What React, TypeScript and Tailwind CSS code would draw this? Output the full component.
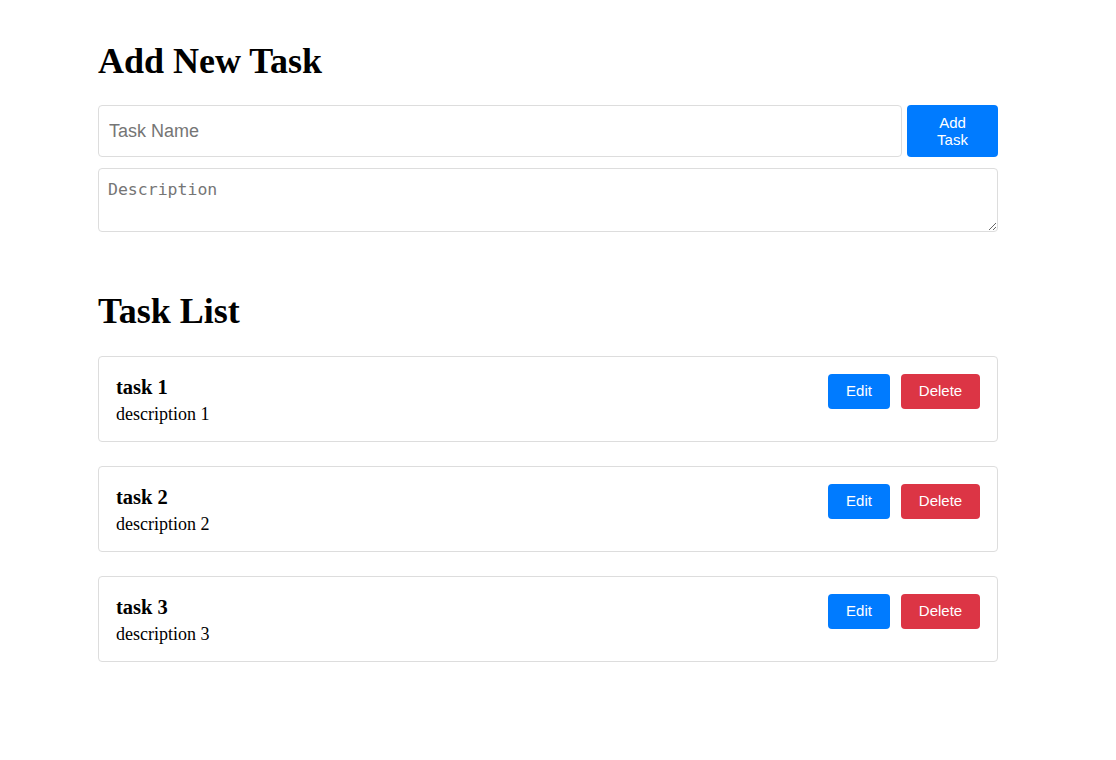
import React from "react";

const tasks = [
  { name: "task 1", desc: "description 1" },
  { name: "task 2", desc: "description 2" },
  { name: "task 3", desc: "description 3" },
];

export default function App() {
  return (
    <div className="min-h-[760px] bg-white" style={{ fontFamily: '"Liberation Serif", serif' }}>
      <div className="ml-[98px] w-[900px] pt-[39px]">
        <h2 className="text-[36px] font-bold leading-[44px] text-black">Add New Task</h2>
        <div className="mt-[22px] flex gap-[5px]">
          <input
            placeholder="Task Name"
            className="h-[52px] flex-1 rounded-[4px] border border-[#dddddd] px-[10px] text-[18px] text-black outline-none placeholder:text-[#757575]"
            style={{ fontFamily: '"Liberation Sans", Arial, sans-serif' }}
          />
          <button
            className="h-[52px] w-[91px] rounded-[4px] bg-[#007bff] text-[15px] leading-[17px] text-white"
            style={{ fontFamily: '"Liberation Sans", Arial, sans-serif' }}
          >
            Add
            <br />
            Task
          </button>
        </div>
        <textarea
          placeholder="Description"
          className="mt-[11px] block h-[64px] w-full rounded-[4px] border border-[#dddddd] px-[9px] pt-[11px] pb-[7px] text-[16.5px] leading-[20px] text-black outline-none placeholder:text-[#757575]"
          style={{ fontFamily: '"DejaVu Sans Mono", monospace' }}
        />
        <h2 className="mt-[57px] text-[36px] font-bold leading-[44px] text-black">Task List</h2>
        <div className="mt-[23px] flex flex-col gap-[24px]">
          {tasks.map((t) => (
            <div
              key={t.name}
              className="flex h-[86px] items-start justify-between rounded-[4px] border border-[#dddddd] px-[17px] py-[17px]"
            >
              <div className="pt-[1px]">
                <div className="text-[20.5px] font-bold leading-[24px] text-black">{t.name}</div>
                <div className="mt-[4px] text-[18px] leading-[22px] text-black">{t.desc}</div>
              </div>
              <div
                className="flex gap-[11px]"
                style={{ fontFamily: '"Liberation Sans", Arial, sans-serif' }}
              >
                <button className="h-[35px] w-[62px] rounded-[4px] bg-[#007bff] text-[15px] text-white">
                  Edit
                </button>
                <button className="h-[35px] w-[79px] rounded-[4px] bg-[#dc3545] text-[15px] text-white">
                  Delete
                </button>
              </div>
            </div>
          ))}
        </div>
      </div>
    </div>
  );
}
